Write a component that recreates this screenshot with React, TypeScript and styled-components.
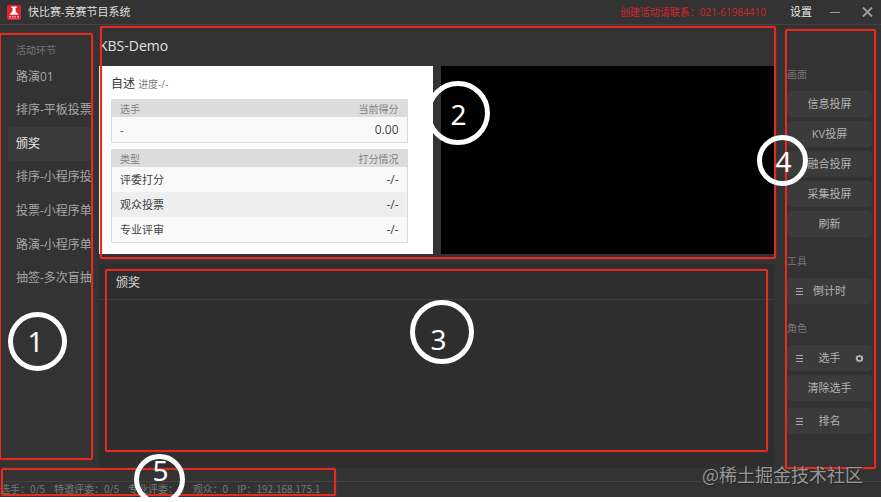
import React from 'react';
import styled, { createGlobalStyle } from 'styled-components';

const Global = createGlobalStyle`
  * { box-sizing: border-box; }
  body {
    margin: 0;
    background: #fff;
    font-family: "Open Sans", "Noto Sans CJK SC", sans-serif;
    font-size: 11px;
    line-height: 16px;
    color: #b4b4b4;
  }
  button {
    font: inherit;
    color: inherit;
    border: 0;
    padding: 0;
    background: none;
    cursor: pointer;
  }
  h1, h2, h3, p { margin: 0; font-weight: 400; }
`;

const Page = styled.div`
  min-height: 100vh;
  padding-bottom: 5px;
  display: flex;
  flex-direction: column;
  position: relative;
  overflow: hidden;
`;

const Window = styled.div`
  flex: 1;
  display: flex;
  flex-direction: column;
  background: #333;
`;

const TitleBar = styled.header`
  height: 25px;
  display: flex;
  align-items: center;
  padding: 0 8px 0 7px;
  border-bottom: 1px solid #444;
  color: #dedede;
`;

const AppName = styled.h1`
  margin-left: 7px;
  flex: 1;
  font-size: 11px;
`;

const Contact = styled.p`
  font-size: 10px;
  color: #d5232f;
  margin-right: 24px;
`;

const SettingsButton = styled.button`
  color: #e6e6e6;
  margin-right: 18px;
`;

const WindowButton = styled.button`
  display: flex;
  color: #9a9a9a;
  & + & { margin-left: 22px; }
`;

const Body = styled.div`
  flex: 1;
  display: grid;
  grid-template-columns: 91px minmax(0, 1fr) 94px;
`;

const Sidebar = styled.nav`
  position: relative;
  padding: 18px 0 0 8px;
`;

const SidebarHeading = styled.h2`
  padding-left: 8px;
  margin-bottom: 3px;
  font-size: 10px;
  line-height: 14px;
  color: #757575;
`;

const StageList = styled.div`
  display: grid;
  grid-auto-rows: 1fr;
  min-height: 235px;
`;

const Stage = styled.button<{ $active?: boolean }>`
  padding-left: 8px;
  overflow: hidden;
  white-space: nowrap;
  text-align: left;
  font-size: 12px;
  border-radius: 4px 0 0 4px;
  color: ${p => (p.$active ? '#e4e4e4' : '#a6a6a6')};
  background: ${p => (p.$active ? '#3a3a3a' : 'transparent')};
`;

const Main = styled.main`
  display: flex;
  flex-direction: column;
  padding: 0 13px 13px 8px;
`;

const Overview = styled.section`
  position: relative;
`;

const EventTitle = styled.h2`
  height: 41px;
  line-height: 41px;
  font-size: 14px;
  color: #e2e2e2;
`;

const Screens = styled.div`
  display: grid;
  grid-template-columns: 1fr 1fr;
  gap: 8px;
  min-height: 188px;
`;

const ScoreScreen = styled.div`
  padding: 10px 25px 8px 12px;
  background: #fff;
  color: #444;
`;

const LiveScreen = styled.div`
  background: #000;
`;

const ScoreTitle = styled.h3`
  font-size: 12px;
  color: #333;
  margin-bottom: 7px;
  small { font-size: 10px; color: #7c7c7c; }
`;

const ScoreTable = styled.table`
  width: 100%;
  border: 1px solid #dadada;
  border-spacing: 0;
  & + & { margin-top: 6px; }
  th, td { padding: 0 8px; text-align: left; }
  th {
    height: 17px;
    font-size: 10px;
    line-height: 14px;
    font-weight: 400;
    color: #828282;
    background: #dcdcdc;
  }
  td { height: 25px; background: #f9f9f9; }
  tbody tr:nth-child(even) td { background: #eee; }
  th:last-child, td:last-child { text-align: right; }
  td:last-child { font-size: 12px; }
`;

const StagePanel = styled.section`
  position: relative;
  flex: 1;
  margin-top: 10px;
  background: #2e2e2e;
`;

const StageTitle = styled.h2`
  height: 36px;
  padding-left: 17px;
  line-height: 38px;
  font-size: 12px;
  color: #d6d6d6;
  border-bottom: 1px solid #3e3e3e;
`;

const Tools = styled.aside`
  position: relative;
  padding: 42px 9px 12px 0;
  display: flex;
  flex-direction: column;
  gap: 17px;
`;

const ToolGroup = styled.section`
  display: flex;
  flex-direction: column;
  gap: 4px;
`;

const ToolHeading = styled.h2`
  font-size: 10px;
  line-height: 14px;
  margin-bottom: 6px;
  color: #767676;
`;

const ToolButton = styled.button<{ $apart?: boolean }>`
  height: 26px;
  padding: 0 8px;
  display: grid;
  grid-template-columns: 9px 1fr 9px;
  align-items: center;
  justify-items: center;
  border-radius: 4px;
  white-space: nowrap;
  background: #3b3b3b;
  margin-top: ${p => (p.$apart ? 3 : 0)}px;
  span { grid-area: 1 / 2; }
`;

const StatusBar = styled.footer`
  position: relative;
  height: 16px;
  display: flex;
  gap: 9px;
  border-top: 1px solid #424242;
  font-family: "Noto Sans CJK SC", sans-serif;
  font-size: 10px;
  line-height: 14px;
  white-space: nowrap;
  color: #777;
`;

/* Callouts laid over the regions they describe. */
const Frame = styled.div<{ $inset: string; $width?: number }>`
  position: absolute;
  z-index: 1;
  inset: ${p => p.$inset};
  ${p => (p.$width ? `width: ${p.$width}px;` : '')}
  border: 2px solid #e62a20;
  border-radius: 2px;
  box-shadow: 0 0 1px #e62a20;
  pointer-events: none;
`;

const Marker = styled.div<{ $x: string; $y: number; $size: number; $pad?: string }>`
  position: absolute;
  z-index: 2;
  left: ${p => p.$x};
  top: ${p => p.$y}px;
  width: ${p => p.$size}px;
  height: ${p => p.$size}px;
  display: flex;
  align-items: center;
  justify-content: center;
  padding: ${p => p.$pad ?? '0'};
  border: 5px solid #fff;
  border-radius: 50%;
  font-family: "Noto Sans", sans-serif;
  font-size: 28px;
  line-height: 28px;
  color: #fff;
  pointer-events: none;
`;

const Watermark = styled.div`
  position: absolute;
  z-index: 3;
  right: 18px;
  bottom: 16px;
  font-family: "Noto Sans CJK SC", sans-serif;
  font-size: 18px;
  line-height: 24px;
  color: #969696;
  text-shadow: 1px 1px 1px #222;
  pointer-events: none;
`;

const Logo = () => (
  <svg width="14" height="15" viewBox="0 0 14 15" aria-hidden="true">
    <rect width="14" height="15" rx="2" fill="#e0202f" />
    <path d="M4.400 1.500h5.200v1.400H8.500v3l3 3.900h-9l3-3.900v-3H4.400z" fill="#fff" />
    <path d="M2 11.500h2M5 11.500h1.500M7.500 11.500h1.500M10 11.500h2M2 13h1.500M4.500 13h2M7.500 13h2M10.500 13H12" stroke="#f7a8ad" strokeWidth="1" />
  </svg>
);

const Menu = () => (
  <svg width="8" height="8" viewBox="0 0 8 8" aria-hidden="true">
    <path d="M0 1.500h7M0 4.500h7M0 7.500h7" stroke="#aaa" strokeWidth="1" />
  </svg>
);

const Gear = () => (
  <svg width="9" height="9" viewBox="0 0 18 18" aria-hidden="true">
    <path
      d="M9 1l2.300 2.600 3.400-.6.6 3.400L17 9l-1.700 2.600-.6 3.400-3.400-.6L9 17l-2.300-2.600-3.400.6-.6-3.400L1 9l1.700-2.600.6-3.400 3.400.6zM9 5.400a3.600 3.600 0 1 0 0 7.200 3.600 3.600 0 0 0 0-7.200z"
      fill="#bdbdbd"
      fillRule="evenodd"
    />
  </svg>
);

const stages = ['路演01', '排序-平板投票', '颁奖', '排序-小程序投', '投票-小程序单', '路演-小程序单', '抽签-多次盲抽'];
const scoreTypes = ['评委打分', '观众投票', '专业评审'];
const screenActions = ['信息投屏', 'KV投屏', '融合投屏', '采集投屏', '刷新'];
const status = ['选手：0/5', '特邀评委：0/5', '专业评委：0', '观众：0', 'IP：192.168.175.1'];

export default function App() {
  return (
    <Page>
      <Global />
      <Window>
        <TitleBar>
          <Logo />
          <AppName>快比赛-竞赛节目系统</AppName>
          <Contact>创建活动请联系：021-61984410</Contact>
          <SettingsButton>设置</SettingsButton>
          <WindowButton aria-label="最小化">
            <svg width="10" height="10" viewBox="0 0 10 10"><path d="M0 5.500h10" stroke="currentColor" /></svg>
          </WindowButton>
          <WindowButton aria-label="关闭">
            <svg width="11" height="10" viewBox="0 0 11 10"><path d="M1 .5l9 9M10 .5l-9 9" stroke="currentColor" strokeWidth="2" /></svg>
          </WindowButton>
        </TitleBar>

        <Body>
          <Sidebar>
            <SidebarHeading>活动环节</SidebarHeading>
            <StageList>
              {stages.map(name => (
                <Stage key={name} $active={name === '颁奖'}>{name}</Stage>
              ))}
            </StageList>
            <Frame $inset="8px -2px 21px -1px" />
            <Marker $x="8px" $y={287} $size={59} $pad="0 4px 2px 0">1</Marker>
          </Sidebar>

          <Main>
            <Overview>
              <EventTitle>KBS-Demo</EventTitle>
              <Screens>
                <ScoreScreen>
                  <ScoreTitle>自述 <small>进度-/-</small></ScoreTitle>
                  <ScoreTable>
                    <thead><tr><th>选手</th><th>当前得分</th></tr></thead>
                    <tbody><tr><td>-</td><td>0.00</td></tr></tbody>
                  </ScoreTable>
                  <ScoreTable>
                    <thead><tr><th>类型</th><th>打分情况</th></tr></thead>
                    <tbody>
                      {scoreTypes.map(type => (
                        <tr key={type}><td>{type}</td><td>-/-</td></tr>
                      ))}
                    </tbody>
                  </ScoreTable>
                </ScoreScreen>
                <LiveScreen />
              </Screens>
              <Frame $inset="1px -2px -5px 1px" />
              <Marker $x="calc(50% - 11px)" $y={56} $size={64} $pad="2px 0 0 2px">2</Marker>
            </Overview>

            <StagePanel>
              <StageTitle>颁奖</StageTitle>
              <Frame $inset="5px 6px 16px 6px" />
              <Marker $x="calc(50% - 27px)" $y={36} $size={64} $pad="14px 6px 0 0">3</Marker>
            </StagePanel>
          </Main>

          <Tools>
            <ToolGroup>
              <ToolHeading>画面</ToolHeading>
              {screenActions.map(name => (
                <ToolButton key={name}><span>{name}</span></ToolButton>
              ))}
            </ToolGroup>
            <ToolGroup>
              <ToolHeading>工具</ToolHeading>
              <ToolButton><Menu /><span>倒计时</span></ToolButton>
            </ToolGroup>
            <ToolGroup>
              <ToolHeading>角色</ToolHeading>
              <ToolButton><Menu /><span>选手</span><Gear /></ToolButton>
              <ToolButton><span>清除选手</span></ToolButton>
              <ToolButton $apart><Menu /><span>排名</span></ToolButton>
            </ToolGroup>
            <Frame $inset="4px 5px 12px -2px" />
            <Marker $x="-30px" $y={110} $size={51} $pad="0 0 0 2px">4</Marker>
          </Tools>
        </Body>

        <StatusBar>
          {status.map(text => <span key={text}>{text}</span>)}
          <Frame $inset="-14px auto 1px 1px" $width={335} />
          <Marker $x="134px" $y={-28} $size={51} $pad="0 0 20px 2px">5</Marker>
        </StatusBar>
      </Window>
      <Watermark>@稀土掘金技术社区</Watermark>
    </Page>
  );
}
